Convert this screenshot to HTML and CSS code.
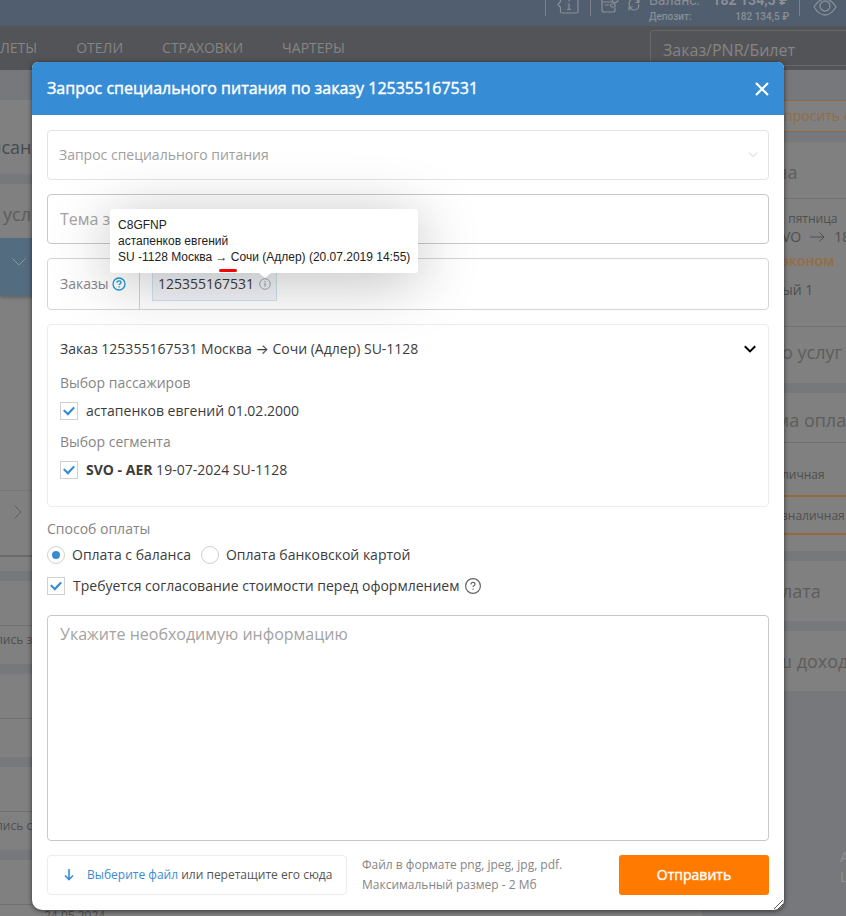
FILE: index.html
```html
<!DOCTYPE html>
<html lang="ru">
<head>
<meta charset="utf-8">
<meta name="viewport" content="width=device-width, initial-scale=1">
<title>Запрос специального питания</title>
<link rel="stylesheet" href="styles.css">
</head>
<body>
<div class="page">
  <header class="topbar">
    <div class="topbar-cell info-cell">
      <svg width="22" height="18" viewBox="0 0 22 18" fill="none" stroke="currentColor" stroke-width="1.2"><path d="M3.500 0v5.500L1 8.500l2.500 3V15.500q0 1.500 1.500 1.500H19.500q1.500 0 1.500-1.500V0M12 8v5.500M10.500 8H12M10 13.500h4M12 4v1.500"/></svg>
    </div>
    <div class="topbar-cell balance">
      <svg width="18" height="17" viewBox="0 0 18 17" fill="none" stroke="currentColor" stroke-width="1.200"><path d="M11 3H1v11q0 2 2 2h9q2 0 2-2v-2M1 6h10M4 9h4M14 8h-3q-1.500 0-1.500 1.500T11 11h3z"/><circle cx="14" cy="3.500" r="3.200"/><path d="M12.500 3.500h3"/></svg>
      <svg width="14" height="17" viewBox="0 0 14 17" fill="none" stroke="currentColor" stroke-width="1.200"><path d="M2.500 10Q1 3 7 3q3 0 4.500 3M12 3v3.500H8.500M11.500 8q1 6-4.500 6-3 0-4.500-3M2 14.500V11h3.500"/></svg>
      <dl class="sums">
        <div class="sum-main"><dt>Баланс:</dt><dd>182 134,5 ₽</dd></div>
        <div class="sum-sub"><dt>Депозит:</dt><dd>182 134,5 ₽</dd></div>
      </dl>
    </div>
    <div class="topbar-cell eye-cell">
      <svg width="24" height="18" viewBox="0 0 24 18" fill="none" stroke="currentColor" stroke-width="1.300"><path d="M1 9Q6 1 12 1t11 8q-5 8-11 8T1 9z"/><circle cx="12" cy="8" r="5"/></svg>
    </div>
  </header>
  <nav class="nav">
    <a href="#">ЛЕТЫ</a><a href="#">ОТЕЛИ</a><a href="#">СТРАХОВКИ</a><a href="#">ЧАРТЕРЫ</a>
    <div class="search">Заказ/PNR/Билет</div>
  </nav>
  <main class="content">
    <div class="col-main">
      <section class="card card-lead">исан</section>
      <section class="card card-service">
        <h2>усл</h2>
        <div class="service-active"><svg width="14" height="8" viewBox="0 0 14 8" fill="none" stroke="currentColor"><path d="M.5.500 7 7 13.500.500"/></svg></div>
        <div class="service-space"></div>
        <div class="service-next"><svg width="8" height="14" viewBox="0 0 8 14" fill="none" stroke="currentColor"><path d="M.5.500 7 7 .5 13.500"/></svg></div>
      </section>
      <section class="card card-log"><div></div><p>лись з</p></section>
      <section class="card card-log"><div></div><p></p></section>
      <section class="card card-log"><div></div><p>лись с</p></section>
      <section class="card card-log"><div></div><p class="log-date">24.05.2024</p></section>
    </div>
    <aside class="col-side">
      <a class="ask" href="#">просить с</a>
      <section class="card">
        <h2 class="tuck">на</h2>
        <div class="flight">
          <small>, пятница</small>
          <span class="route">VO <svg width="15" height="10" viewBox="0 0 15 10" fill="none" stroke="currentColor"><path d="M0 5h14M9.500.500 14 5 9.500 9.500"/></svg> 18</span>
          <span class="fare">эконом</span>
          <span>ый 1</span>
        </div>
        <h2 class="services-title">о услуг</h2>
      </section>
      <section class="card card-pay">
        <h2 class="tuck">ма оплат</h2>
        <p class="pay pay-first">личная</p>
        <p class="pay pay-second">зналичная</p>
      </section>
      <section class="card card-single"><h2>лата</h2></section>
      <section class="card card-single"><h2 class="tuck">ш доход</h2></section>
      <p class="corner">А<br>Ц</p>
    </aside>
  </main>
</div>

<div class="overlay">
  <form class="modal" role="dialog" aria-labelledby="dialog-title">
    <header class="modal-head">
      <h1 id="dialog-title">Запрос специального питания по заказу 125355167531</h1>
      <button class="close" type="button" aria-label="Закрыть"><svg width="14" height="14" viewBox="0 0 14 14" fill="none" stroke="currentColor" stroke-width="2.200"><path d="M1 1l12 12M13 1L1 13"/></svg></button>
    </header>
    <div class="modal-body">
      <div class="select-wrap">
        <select class="field" aria-label="Тип запроса" disabled><option>Запрос специального питания</option></select>
        <svg width="10" height="6" viewBox="0 0 10 6" fill="none" stroke="currentColor"><path d="M1 .5l4 4 4-4"/></svg>
      </div>
      <input class="field theme" type="text" placeholder="Тема запроса" aria-label="Тема запроса">
      <div class="orders">
        <div class="orders-label">Заказы
          <svg class="blue" width="14" height="14" viewBox="0 0 14 14" fill="none" stroke="currentColor" stroke-width="1.300"><circle cx="7" cy="7" r="6"/><path d="M5 5.700q0-1.900 2-1.900t2 1.700q0 .8-1 1.400-.9.500-.9 1.200M7.100 9.300v1.300"/></svg>
        </div>
        <div class="orders-list">
          <span class="tag">125355167531
            <span class="tip-anchor">
              <svg width="12" height="12" viewBox="0 0 12 12" fill="none" stroke="currentColor"><circle cx="6" cy="6" r="5.300"/><path d="M6 5v3.500M6 3v1.200" stroke-width="1.300"/></svg>
              <span class="tip" role="tooltip">C8GFNP<br>астапенков евгений<br>SU -1128 Москва → Сочи (Адлер) (20.07.2019 14:55)<i class="mark"></i></span>
            </span>
          </span>
        </div>
      </div>
      <section class="order">
        <div class="order-head"><span>Заказ 125355167531 Москва <span class="arrow">→</span> Сочи (Адлер) SU-1128</span>
          <svg width="12" height="8" viewBox="0 0 12 8" fill="none" stroke="currentColor" stroke-width="2"><path d="M.8 1.200 6 6.400l5.200-5.200"/></svg></div>
        <h3>Выбор пассажиров</h3>
        <label class="choice"><input type="checkbox" checked><span>астапенков евгений 01.02.2000</span></label>
        <h3>Выбор сегмента</h3>
        <label class="choice"><input type="checkbox" checked><span><b>SVO - AER</b> 19-07-2024 SU-1128</span></label>
      </section>
      <section class="payment">
        <h3>Способ оплаты</h3>
        <div class="radios">
          <label class="choice"><input type="radio" name="pay" checked><span>Оплата с баланса</span></label>
          <label class="choice"><input type="radio" name="pay"><span>Оплата банковской картой</span></label>
        </div>
        <div class="approve">
          <label class="choice"><input type="checkbox" checked><span>Требуется согласование стоимости перед оформлением</span></label>
          <svg class="help" width="16" height="16" viewBox="0 0 16 16" fill="none" stroke="currentColor"><circle cx="8" cy="8" r="7.400" stroke-width="1.200"/><path d="M6 6.400q0-2 2-2t2 1.800q0 .9-1 1.500-1 .6-1 1.400M8 10.500v1.300" stroke-width="1.200"/></svg>
        </div>
      </section>
      <textarea class="field info" placeholder="Укажите необходимую информацию" aria-label="Информация"></textarea>
      <footer class="modal-foot">
        <div class="drop">
          <svg width="10" height="12" viewBox="0 0 10 12" fill="none" stroke="currentColor" stroke-width="1.600"><path d="M5 0v10.500M1 6.500l4 4 4-4"/></svg>
          <span><button class="pick" type="button">Выберите файл</button> или перетащите его сюда</span>
        </div>
        <p class="hint">Файл в формате png, jpeg, jpg, pdf.<br>Максимальный размер - 2 Мб</p>
        <button class="send" type="button">Отправить</button>
      </footer>
    </div>
    <svg class="grip" width="11" height="11" viewBox="0 0 11 11" fill="none" stroke="#555"><path d="M1 10 10 1M5 10l5-5"/></svg>
  </form>
</div>
</body>
</html>
```
FILE: styles.css
```css
* { box-sizing: border-box; }

body, h1, h2, h3, p, dl, dd { margin: 0; }

body {
  height: 100vh;
  overflow: hidden;
  position: relative;
  font: 14px/20px "Open Sans", "Noto Sans", sans-serif;
  color: #3c3c3c;
  background: #76787b;
}

h1, h2, h3 { font-weight: 400; }
a { color: inherit; text-decoration: none; }
button, input, select, textarea { font: inherit; }
svg { flex: none; display: block; }

/* Dimmed page */
.page { height: 100vh; overflow: hidden; color: #4f4f4f; }

.topbar {
  height: 26px;
  display: flex;
  justify-content: flex-end;
  background: #505e70;
  color: #8a8f94;
}
.topbar-cell {
  height: 16px;
  display: flex;
  align-items: flex-end;
  border-left: 1px solid #7c8288;
}
.info-cell { width: 45px; padding: 0 0 2px 11px; }
.balance { width: 209px; padding: 0 10px 3px; gap: 8px; }
.eye-cell { width: 47px; padding-left: 13px; }
.sums {
  width: 140px;
  margin-bottom: -11px;
  font-family: Roboto, sans-serif;
}
.sums div { display: flex; justify-content: space-between; }
.sum-main { font-size: 14px; line-height: 20px; }
.sum-main dd { font-weight: 700; }
.sum-sub { font-size: 10px; line-height: 14px; font-weight: 500; }

.nav {
  height: 44px;
  display: flex;
  align-items: center;
  gap: 39px;
  background: #535457;
  color: #858585;
}
.search {
  width: 196px;
  height: 36px;
  margin-left: auto;
  padding-left: 12px;
  border: 1px solid #66686a;
  border-right: 0;
  border-radius: 4px 0 0 4px;
  font-size: 16px;
  line-height: 38px;
}

.content { display: flex; justify-content: space-between; margin-top: 30px; }
.col-main { width: 83%; display: flex; flex-direction: column; gap: 10px; }
.col-side {
  width: 76px;
  display: flex;
  flex-direction: column;
  gap: 10px;
  white-space: nowrap;
}
.card { background: #808080; }
.card h2 { font-size: 18px; line-height: 60px; color: #5d5d5d; }
.col-side .card h2 { height: 56px; padding-left: 12px; overflow: hidden; }
.col-side .card .tuck { padding-left: 6px; }
.col-side .card .services-title { line-height: 50px; }
.col-side .card-single h2 { height: 60px; }

.card-lead { height: 74px; padding-top: 32px; text-indent: -10px; font-size: 18px; line-height: 30px; color: #454b52; }
.card-service h2 { height: 54px; padding-left: 3px; }
.service-active { height: 58px; padding: 20px 12px; background: #546c7f; color: #899; box-shadow: 0 2px 3px #666; }
.service-space { height: 194px; }
.service-next { height: 81px; padding: 14px; border-top: 1px solid #777; color: #5f5f5f; background: linear-gradient(#808080 0 64px, #6b6b6b 64px 66px, #808080 66px); }
.card-log div { height: 45px; border-bottom: 1px solid #707070; }
.card-log p { height: 38px; padding-top: 4px; font-size: 12px; text-indent: -4px; }
.card-log .log-date { padding: 1px 0 0 48px; }

.ask {
  height: 32px;
  padding-left: 14px;
  border: solid #8d6a46;
  border-width: 1px 0;
  line-height: 30px;
  color: #926c45;
  background: #808080;
}
.flight {
  display: flex;
  flex-direction: column;
  height: 129px;
  padding: 12px 0 0 12px;
  border: solid #6f6f6f;
  border-width: 1px 0;
}
.flight small { font-size: 12px; line-height: 16px; }
.route { display: flex; align-items: center; gap: 9px; }
.fare { margin: 4px 0 9px; color: #966b40; font-weight: 600; }
.col-side .card-pay h2 { height: 50px; line-height: 54px; border-bottom: 1px solid #6f6f6f; }
.pay { padding-left: 12px; font-size: 12px; border-bottom: 2px solid #96693c; }
.pay-first { padding-top: 22px; height: 54px; }
.pay-second { height: 38px; padding-top: 9px; }
.card-pay { padding-bottom: 16px; }
.corner { margin-top: 146px; padding-left: 70px; color: #909090; }

/* Dialog */
.overlay {
  position: absolute;
  inset: 0;
  padding: 62px 62px 6px 32px;
}
.modal {
  position: relative;
  min-height: 100%;
  display: flex;
  flex-direction: column;
  border-radius: 6px 6px 10px 10px;
  background: #fff;
  box-shadow: 0 1px 5px rgba(0, 0, 0, .6);
}
.modal-head {
  display: flex;
  align-items: center;
  justify-content: space-between;
  padding: 0 15px;
  border-radius: 6px 6px 0 0;
  background: #368dd5;
  color: #fff;
}
.modal-head h1 { font-size: 16px; line-height: 53px; -webkit-text-stroke: 0.4px #fff; }
.close { padding: 0; border: 0; background: none; color: #fff; }
.modal-body {
  flex: 1;
  display: flex;
  flex-direction: column;
  gap: 14px;
  padding: 15px;
}
.field {
  display: block;
  width: 100%;
  height: 50px;
  padding: 0 12px;
  border: 1px solid #c8c8c8;
  border-radius: 4px;
  background: #fff;
  color: #333;
  font-size: 16px;
}
.field::placeholder { color: #a3a3a3; opacity: 1; }
.select-wrap { display: grid; align-items: center; color: #ccc; }
.select-wrap > * { grid-area: 1 / 1; }
.select-wrap svg { justify-self: end; margin-right: 11px; }
.select-wrap select {
  appearance: none;
  padding: 0 11px;
  border-color: #e3e3e3;
  color: #a0a0a0;
  font-size: 14px;
  opacity: 1;
}
.orders {
  display: flex;
  height: 52px;
  border: 1px solid #d5d5d5;
  border-radius: 4px;
}
.orders-label {
  width: 92px;
  display: flex;
  align-items: center;
  gap: 4px;
  padding-left: 12px;
  border-right: 1px solid #d5d5d5;
  color: #858585;
}
.blue { color: #1d9ad8; }
.orders-list { display: flex; align-items: center; padding-left: 12px; }
.tag {
  height: 34px;
  display: flex;
  align-items: center;
  gap: 5px;
  padding: 0 5px;
  border: 1px solid #cfe4ee;
  background: #f3f5fa;
}
.tip-anchor { position: relative; color: #9eacb5; }
.tip {
  position: absolute;
  left: -149px;
  bottom: 17px;
  padding: 8px;
  border-radius: 3px;
  background: #fff;
  box-shadow: 0 8px 60px rgba(0, 0, 0, .26);
  color: #222;
  font: 12px/16px "Liberation Sans", Arial, sans-serif;
  white-space: nowrap;
}
.tip::after {
  content: "";
  position: absolute;
  left: 149px;
  top: 100%;
  border: 6px solid transparent;
  border-top: 5px solid #fff;
  border-bottom: 0;
}
.mark {
  position: absolute;
  left: 109px;
  bottom: 1px;
  width: 18px;
  height: 3px;
  border-radius: 2px;
  background: #f00;
}
.order {
  padding: 14px 12px 26px;
  border: 1px solid #ececec;
  border-radius: 4px;
}
.order-head { display: flex; align-items: center; justify-content: space-between; margin-bottom: 14px; }
.order-head svg { color: #000; }
.arrow { font-family: Inter, sans-serif; line-height: 1; }
h3 { font-size: 14px; color: #858585; }
.order h3 { margin-bottom: 8px; }
.order .choice { margin-bottom: 11px; }
.order .choice:last-child { margin-bottom: 0; }
.choice { display: flex; align-items: center; gap: 8px; }
.choice input {
  appearance: none;
  flex: none;
  display: grid;
  place-items: center;
  width: 18px;
  height: 18px;
  margin: 0;
  border: 1px solid #d0d0d0;
  background: #fff;
}
.choice input[type="radio"] { border-radius: 50%; }
.choice input[type="checkbox"]:checked::before {
  content: "";
  width: 12px;
  height: 10px;
  background: #368dd5;
  clip-path: polygon(0 48%, 13% 34%, 40% 64%, 86% 8%, 100% 20%, 41% 98%);
}
.choice input[type="radio"]:checked::before {
  content: "";
  width: 8px;
  height: 8px;
  border-radius: 50%;
  background: #368dd5;
}
.payment { padding-bottom: 4px; }
.payment h3 { line-height: 16px; margin-bottom: 8px; }
.radios { display: flex; gap: 10px; margin-bottom: 10px; }
.radios .choice { gap: 7px; }
.approve { display: flex; align-items: center; gap: 6px; height: 22px; }
.help { color: #666; }
.info { flex: 1; min-height: 120px; padding: 8px 12px; resize: none; line-height: 20px; }
.modal-foot { display: flex; align-items: center; height: 40px; }
.drop {
  width: 300px;
  height: 40px;
  display: flex;
  align-items: center;
  gap: 13px;
  padding-left: 16px;
  border: 1px solid #ececec;
  border-radius: 4px;
  font-size: 12px;
  color: #555;
  white-space: nowrap;
}
.drop svg, .pick { color: #368dd5; }
.pick { padding: 0; border: 0; background: none; }
.hint { margin-left: 15px; font-size: 12px; color: #858585; }
.send {
  width: 150px;
  height: 40px;
  margin-left: auto;
  border: 0;
  border-radius: 3px;
  background: #ff7a00;
  color: #fff;
  -webkit-text-stroke: 0.4px #fff;
}
.grip { position: absolute; right: 0; bottom: 0; }
```
